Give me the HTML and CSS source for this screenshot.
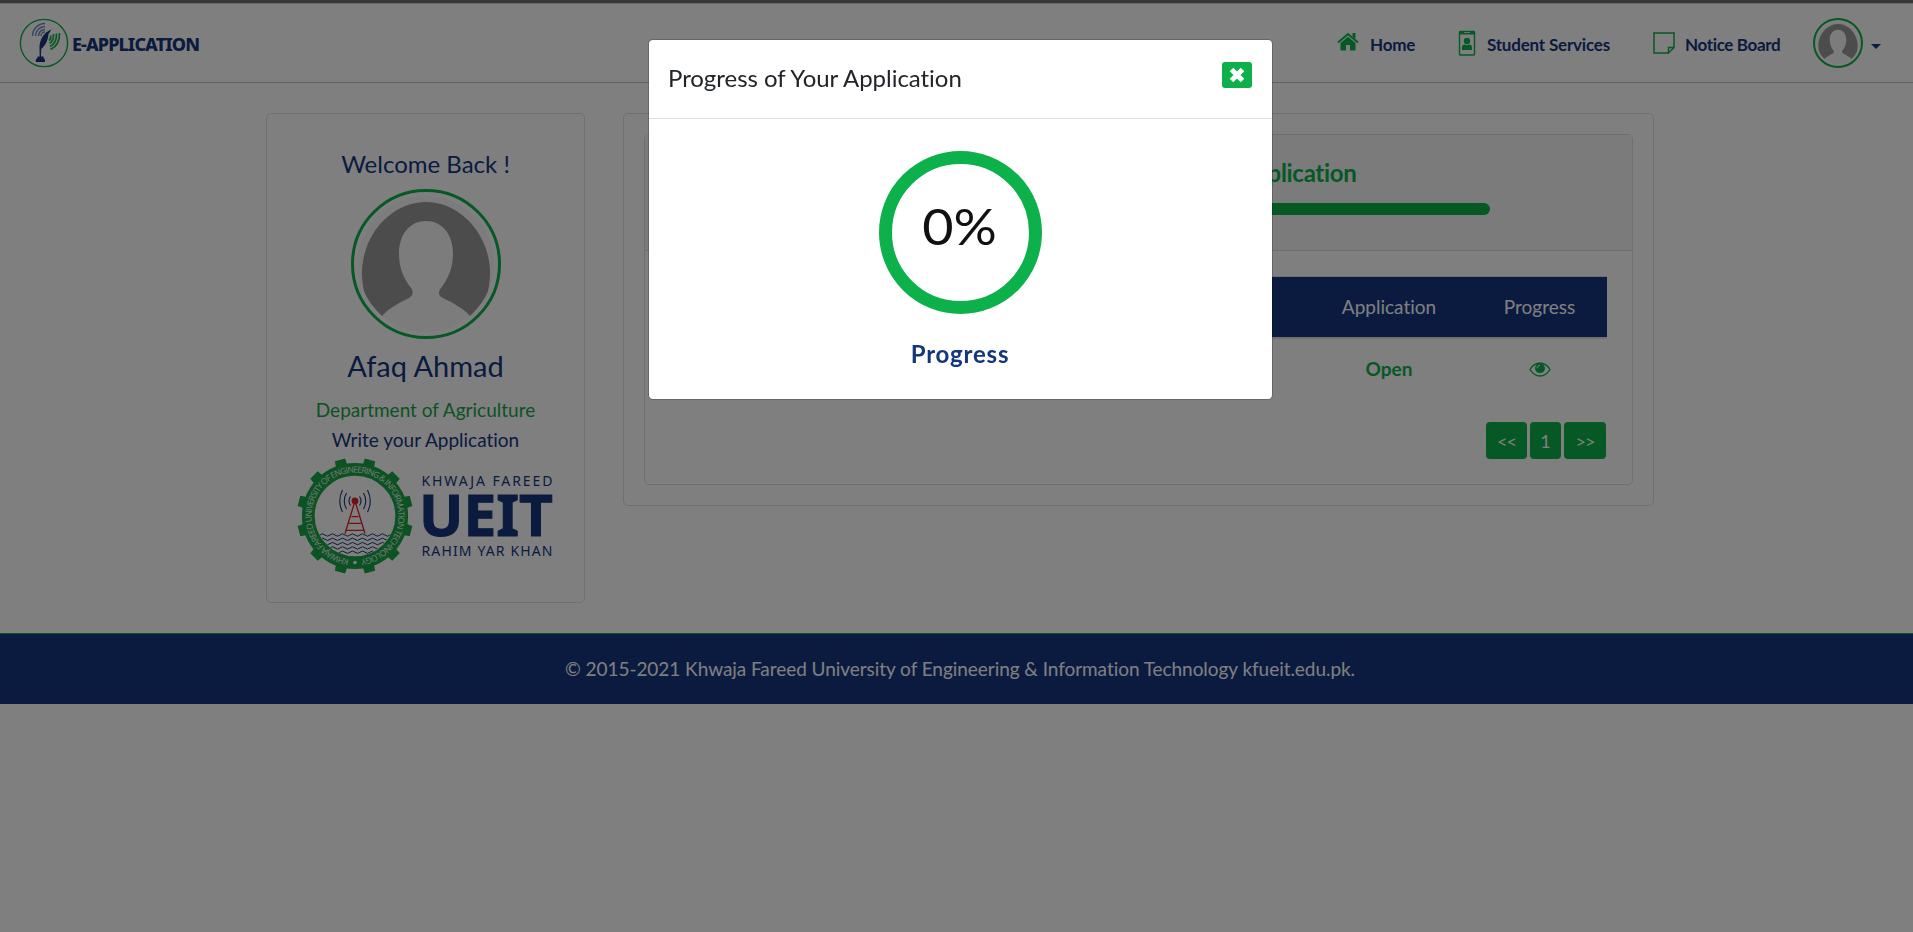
FILE: index.html
```html
<!DOCTYPE html>
<html lang="en">
<head>
<meta charset="utf-8">
<title>E-Application</title>
<link rel="stylesheet" href="styles.css">
</head>
<body>
<svg width="0" height="0" class="defs">
  <symbol id="avatar" viewBox="0 0 150 150">
    <circle cx="75" cy="75" r="68" fill="#f8f8f8"/>
    <path fill="#999" d="M31 127C22 118 16 110 13 102C10 88 10 75 15 60C24 33 48 13 75 13S126 33 135 60C140 75 140 88 137 102C134 110 128 118 119 127C113 120 104 115 92 109C87 107 87 103 90 99C97 90 102 79 102 65C102 45 91 32 75 32S48 45 48 65C48 79 53 90 60 99C63 103 62 107 58 109C46 115 37 120 31 127Z"/>
  </symbol>
</svg>

<header class="navbar">
  <a class="brand">
    <svg class="brand-mark" viewBox="0 0 50 50">
      <circle cx="25" cy="25" r="23.6" fill="none" stroke="#0db14b" stroke-width="1.4"/>
      <g fill="none" stroke="#6f86c4" stroke-width="1.5">
        <path d="M13.500 18A12.500 12.500 0 0 1 26 5.500"/><path d="M16.500 18A9.500 9.500 0 0 1 26 8.500"/><path d="M19.500 18A6.500 6.500 0 0 1 26 11.500"/><path d="M22 18A4 4 0 0 1 26 14"/>
      </g>
      <g fill="none" stroke="#0db14b" stroke-width="1.700">
        <path d="M40.500 15Q41 27 31.500 31.500"/><path d="M37.500 15.500Q38 25 31 28.500"/><path d="M34.500 16Q35 22.500 30.500 25.500"/><path d="M32 17.500Q32 21 30 22.500"/>
      </g>
      <path fill="#14367e" d="M32.500 11.500C25 14 20 22 20.500 31L20.700 38.500H18.500V40Q16 41 17 44H26Q26.500 41 24.500 40V38.500H22L22.200 31C27 27 29 22 29.500 16Z"/>
    </svg>
    <span class="brand-name">E-APPLICATION</span>
  </a>
  <nav class="menu">
    <a class="item home"><svg width="22" height="19" viewBox="0 0 22 19"><path d="M1 10.500L11 2L21 10.500" fill="none" stroke="#0db14b" stroke-width="2"/><path fill="#0db14b" d="M15.500 1H18.500V7L15.500 4.500ZM3.500 11L11 4.700L18.500 11V18.500H13V13H9V18.500H3.500Z"/></svg><span>Home</span></a>
    <a class="item services"><svg width="18" height="26" viewBox="0 0 18 26"><rect x="1.500" y="1.500" width="15" height="23.500" rx="1" fill="none" stroke="#0db14b" stroke-width="1.400"/><path fill="#0db14b" d="M1 1H6V3H12V1H17V4.500H1Z"/><circle cx="9" cy="11" r="3.200" fill="#0db14b"/><path fill="#0db14b" d="M4 20V17Q4 14.500 7 14.500Q9 16 11 14.500Q14 14.500 14 17V20Z"/></svg><span>Student Services</span></a>
    <a class="item notice"><svg width="22" height="22" viewBox="0 0 22 22" fill="none" stroke="#0db14b" stroke-width="1.500"><path d="M15.500 21H1V1H21V15.500L15.500 21V15.500H21"/></svg><span>Notice Board</span></a>
    <a class="account"><svg class="thumb"><use href="#avatar"/></svg><i class="caret"></i></a>
  </nav>
</header>

<main class="page">
  <aside class="card profile">
    <h2 class="welcome"><span>Welcome Back !</span></h2>
    <svg class="photo"><use href="#avatar" x="-3" y="-3" width="150" height="150"/></svg>
    <h3 class="name"><span>Afaq Ahmad</span></h3>
    <p class="dept"><span>Department of Agriculture</span></p>
    <p class="write"><span>Write your Application</span></p>
    <svg class="ueit" width="256" height="116" viewBox="-58 -58 256 116">
      <defs>
        <clipPath id="hole"><circle r="40"/></clipPath>
        <path id="lap" d="M0 43.500A43.500 43.500 0 0 1 0 -43.500A43.500 43.500 0 0 1 0 43.500"/>
        <path id="wave" d="M-45 0q2.500 -2.400 5 0t5 0t5 0t5 0t5 0t5 0t5 0t5 0t5 0t5 0t5 0t5 0t5 0t5 0t5 0t5 0t5 0t5 0"/>
      </defs>
      <g fill="#18a547">
        <g id="teeth"><path d="M-6 -50L-5.300 -58H5.300L6 -50Z" transform="rotate(15)"/><path d="M-6 -50L-5.300 -58H5.300L6 -50Z" transform="rotate(45)"/><path d="M-6 -50L-5.300 -58H5.300L6 -50Z" transform="rotate(75)"/></g>
        <use href="#teeth" transform="rotate(90)"/><use href="#teeth" transform="rotate(180)"/><use href="#teeth" transform="rotate(270)"/>
      </g>
      <circle r="46.700" fill="none" stroke="#18a547" stroke-width="12.800"/>
      <text class="lap"><textPath href="#lap" startOffset="6" textLength="261">KHWAJA FAREED UNIVERSITY OF ENGINEERING &amp; INFORMATION TECHNOLOGY</textPath></text>
      <circle cy="46.500" r="1.800" fill="#fff"/>
      <g clip-path="url(#hole)" fill="none" stroke="#14367e" stroke-width="1">
        <use href="#wave" y="19"/><use href="#wave" y="23.300"/><use href="#wave" y="27.600"/><use href="#wave" y="31.900"/><use href="#wave" y="36.200"/>
      </g>
      <g fill="none" stroke="#14367e" stroke-width="1.100">
        <path id="sig" d="M4.500 -19.500Q7.500 -15 4.500 -10.500M8.500 -23Q13 -15 8.500 -7M12.500 -26Q18 -15 12.500 -4"/>
        <use href="#sig" transform="scale(-1 1)"/>
      </g>
      <g fill="none" stroke="#e31e25" stroke-width="1.300"><path d="M-10 17.500L0 -15L10 17.500M-3.500 .7H3.500M-6 7.300H6M-8.500 14.300H8.500"/><circle cy="-15" r="2.800" fill="#e31e25"/></g>
      <g class="ueit-text">
        <text x="66.500" y="-29.800" font-size="14" textLength="131">KHWAJA FAREED</text>
        <text class="big" x="64" y="20" font-size="56.500" font-weight="700" textLength="134" lengthAdjust="spacingAndGlyphs">UEIT</text>
        <text x="66.500" y="40.200" font-size="14" textLength="131">RAHIM YAR KHAN</text>
      </g>
    </svg>
  </aside>

  <section class="card board">
    <div class="card panel">
      <div class="panel-head">
        <h2><span>Application</span></h2>
        <div class="bar"></div>
      </div>
      <div class="panel-body">
        <div class="row thead"><span class="c1"></span><span class="c2"><b>Application</b></span><span class="c3"><b>Progress</b></span></div>
        <div class="row tbody"><span class="c1"></span><span class="c2"><b>Open</b></span><span class="c3"><svg width="22" height="15" viewBox="0 0 22 15"><path fill="none" stroke="#0db14b" stroke-width="1.400" d="M1 7.500Q5 1 11 1T21 7.500Q17 14 11 14T1 7.500Z"/><circle cx="11" cy="6.200" r="4.900" fill="#0db14b"/><path d="M8 6.300Q8.200 3.500 11 3.300" stroke="#fff" stroke-width="1" fill="none"/></svg></span></div>
        <div class="pages"><a class="prev">&lt;&lt;</a><a class="num">1</a><a class="next">&gt;&gt;</a></div>
      </div>
    </div>
  </section>
</main>

<footer class="footer"><span>© 2015-2021 Khwaja Fareed University of Engineering &amp; Information Technology kfueit.edu.pk.</span></footer>

<div class="backdrop">
  <div class="modal">
    <div class="modal-head">
      <h4><span>Progress of Your Application</span></h4>
      <button class="close"><svg width="16" height="16" viewBox="0 0 16 16"><path d="M2.500 2.500L13.500 13.500M13.500 2.500L2.500 13.500" stroke="#fff" stroke-width="5"/></svg></button>
    </div>
    <div class="modal-body">
      <div class="dial"><span>0%</span></div>
      <div class="dial-label"><span>Progress</span></div>
    </div>
  </div>
</div>
</body>
</html>
```
FILE: styles.css
```css
* { box-sizing: border-box; }
body { margin: 0; height: 932px; overflow: hidden; background: #fff; color: #14367e; font-family: Lato, "Open Sans", sans-serif; font-variant-ligatures: none; }
h2, h3, h4, p { margin: 0; font-weight: 400; }
.defs { position: absolute; }
svg { display: block; flex: none; }

.navbar { height: 83px; border-top: 3px solid #6b6e77; border-bottom: 1px solid #c4c4c4; display: flex; justify-content: space-between; padding: 0 32px 0 19px; box-shadow: inset 0 1px 0 #d0d0d0; }
.brand { display: flex; align-items: flex-start; padding-top: 15px; gap: 3px; }
.brand-mark { width: 50px; height: 50px; }
.brand-name { font: 800 18px/52px "Noto Sans", sans-serif; letter-spacing: -.9px; white-space: nowrap; }
.menu { display: flex; align-items: flex-start; white-space: nowrap; font-weight: 700; font-size: 17px; line-height: 24px; }
.item { display: flex; align-items: flex-start; }
.item span { margin-top: 30px; letter-spacing: -.2px; }
.item svg { margin-top: 29px; }
.home { width: 121px; gap: 11px; }
.services { width: 195px; gap: 11px; }
.services svg { margin-top: 27px; }
.notice { width: 160px; gap: 10px; }
.notice span { letter-spacing: -.35px; }
.account { display: flex; gap: 8px; }
.thumb { width: 50px; height: 50px; margin-top: 15px; border: 2px solid #0db14b; border-radius: 50%; }
.caret { margin-top: 41px; border: 5px solid transparent; border-top-color: #14367e; border-bottom: 0; height: 5px; }

.page { display: flex; align-items: flex-start; gap: 38px; padding: 30px 258px 30px 266px; }
.card { border: 1px solid #dfdfdf; border-radius: 5px; }
.profile { width: 319px; height: 490px; display: flex; flex-direction: column; align-items: center; padding-top: 34px; white-space: nowrap; }
.welcome { font-size: 24px; line-height: 32px; }
.photo { width: 150px; height: 150px; margin-top: 9px; border: 3px solid #0db14b; border-radius: 50%; }
.name { font-size: 29px; line-height: 40px; margin-top: 7px; }
.dept { font-size: 19px; line-height: 30px; color: #18a547; margin-top: 9px; }
.write { font-size: 19px; line-height: 30px; }
.ueit { margin: 3px 2px 0 0; }
.lap { font: 8.500px "Open Sans", sans-serif; fill: #e8f5ec; }
.ueit-text { font-family: "Noto Sans", sans-serif; fill: #14367e; }
.big { stroke: #14367e; stroke-width: 1px; }

.board { width: 1031px; height: 393px; padding: 20px; }
.panel { height: 351px; }
.panel-head { height: 116px; background: #f7f7f7; border-bottom: 1px solid #dfdfdf; display: flex; flex-direction: column; align-items: center; padding-top: 21px; }
.panel-head h2 { width: 436px; text-align: right; font-weight: 700; font-size: 24px; line-height: 34px; color: #0db14b; letter-spacing: -.3px; }
.bar { width: 703px; height: 12px; margin-top: 13px; border-radius: 6px; background: #0db14b; }
.panel-body { padding: 25px; }
.row { display: flex; text-align: center; font-size: 19px; }
.row b { font-weight: 400; }
.c1 { width: 635px; }
.c2 { width: 168px; }
.c3 { flex: 1; display: flex; justify-content: center; align-items: center; padding-right: 1px; }
.thead { height: 63px; border-top: 1px solid #dee2e6; border-bottom: 2px solid #dee2e6; background: #14367e; background-clip: padding-box; color: #fff; line-height: 60px; }
.tbody { height: 60px; line-height: 60px; color: #0db14b; }
.tbody b { font-weight: 700; }
.pages { display: flex; justify-content: flex-end; gap: 3px; margin: 23px 1px 0 0; }
.pages a { height: 37px; border-radius: 4px; background: #0db14b; color: #fff; text-align: center; font-size: 18px; line-height: 38px; }
.prev, .next { letter-spacing: -1px; }
.prev { width: 41px; } .num { width: 31px; } .next { width: 42px; }

.footer { height: 71px; background: #14367e; border-top: 1px solid #0db14b; color: #fff; text-align: center; font-size: 19px; line-height: 70px; white-space: nowrap; padding-left: 7px; letter-spacing: -.05px; }

.backdrop { position: fixed; inset: 0; background: rgba(0,0,0,.5); display: flex; justify-content: center; align-items: flex-start; padding: 39px 0 0 8px; }
.modal { width: 625px; height: 361px; background: #fff; background-clip: padding-box; border: 1px solid rgba(0,0,0,.2); border-radius: 5px; }
.modal-head { height: 79px; border-bottom: 1px solid #dee2e6; display: flex; justify-content: space-between; align-items: flex-start; padding: 22px 20px 0 19px; color: #212529; }
.modal-head h4 { font-size: 24px; line-height: 32px; white-space: nowrap; letter-spacing: -.04px; }
.close { width: 30px; height: 26px; padding: 0; border: 0; border-radius: 3px; background: #0db14b; display: flex; align-items: center; justify-content: center; }
.modal-body { display: flex; flex-direction: column; align-items: center; padding: 32px 1px 0 0; }
.dial { width: 163px; height: 163px; border: 13px solid #0db14b; border-radius: 50%; text-align: center; font-size: 50px; line-height: 125px; color: #111; }
.dial span { display: inline-block; transform: scaleX(1.08); }
.dial-label { font-size: 24px; line-height: 32px; font-weight: 700; margin-top: 24px; letter-spacing: .8px; }
```
